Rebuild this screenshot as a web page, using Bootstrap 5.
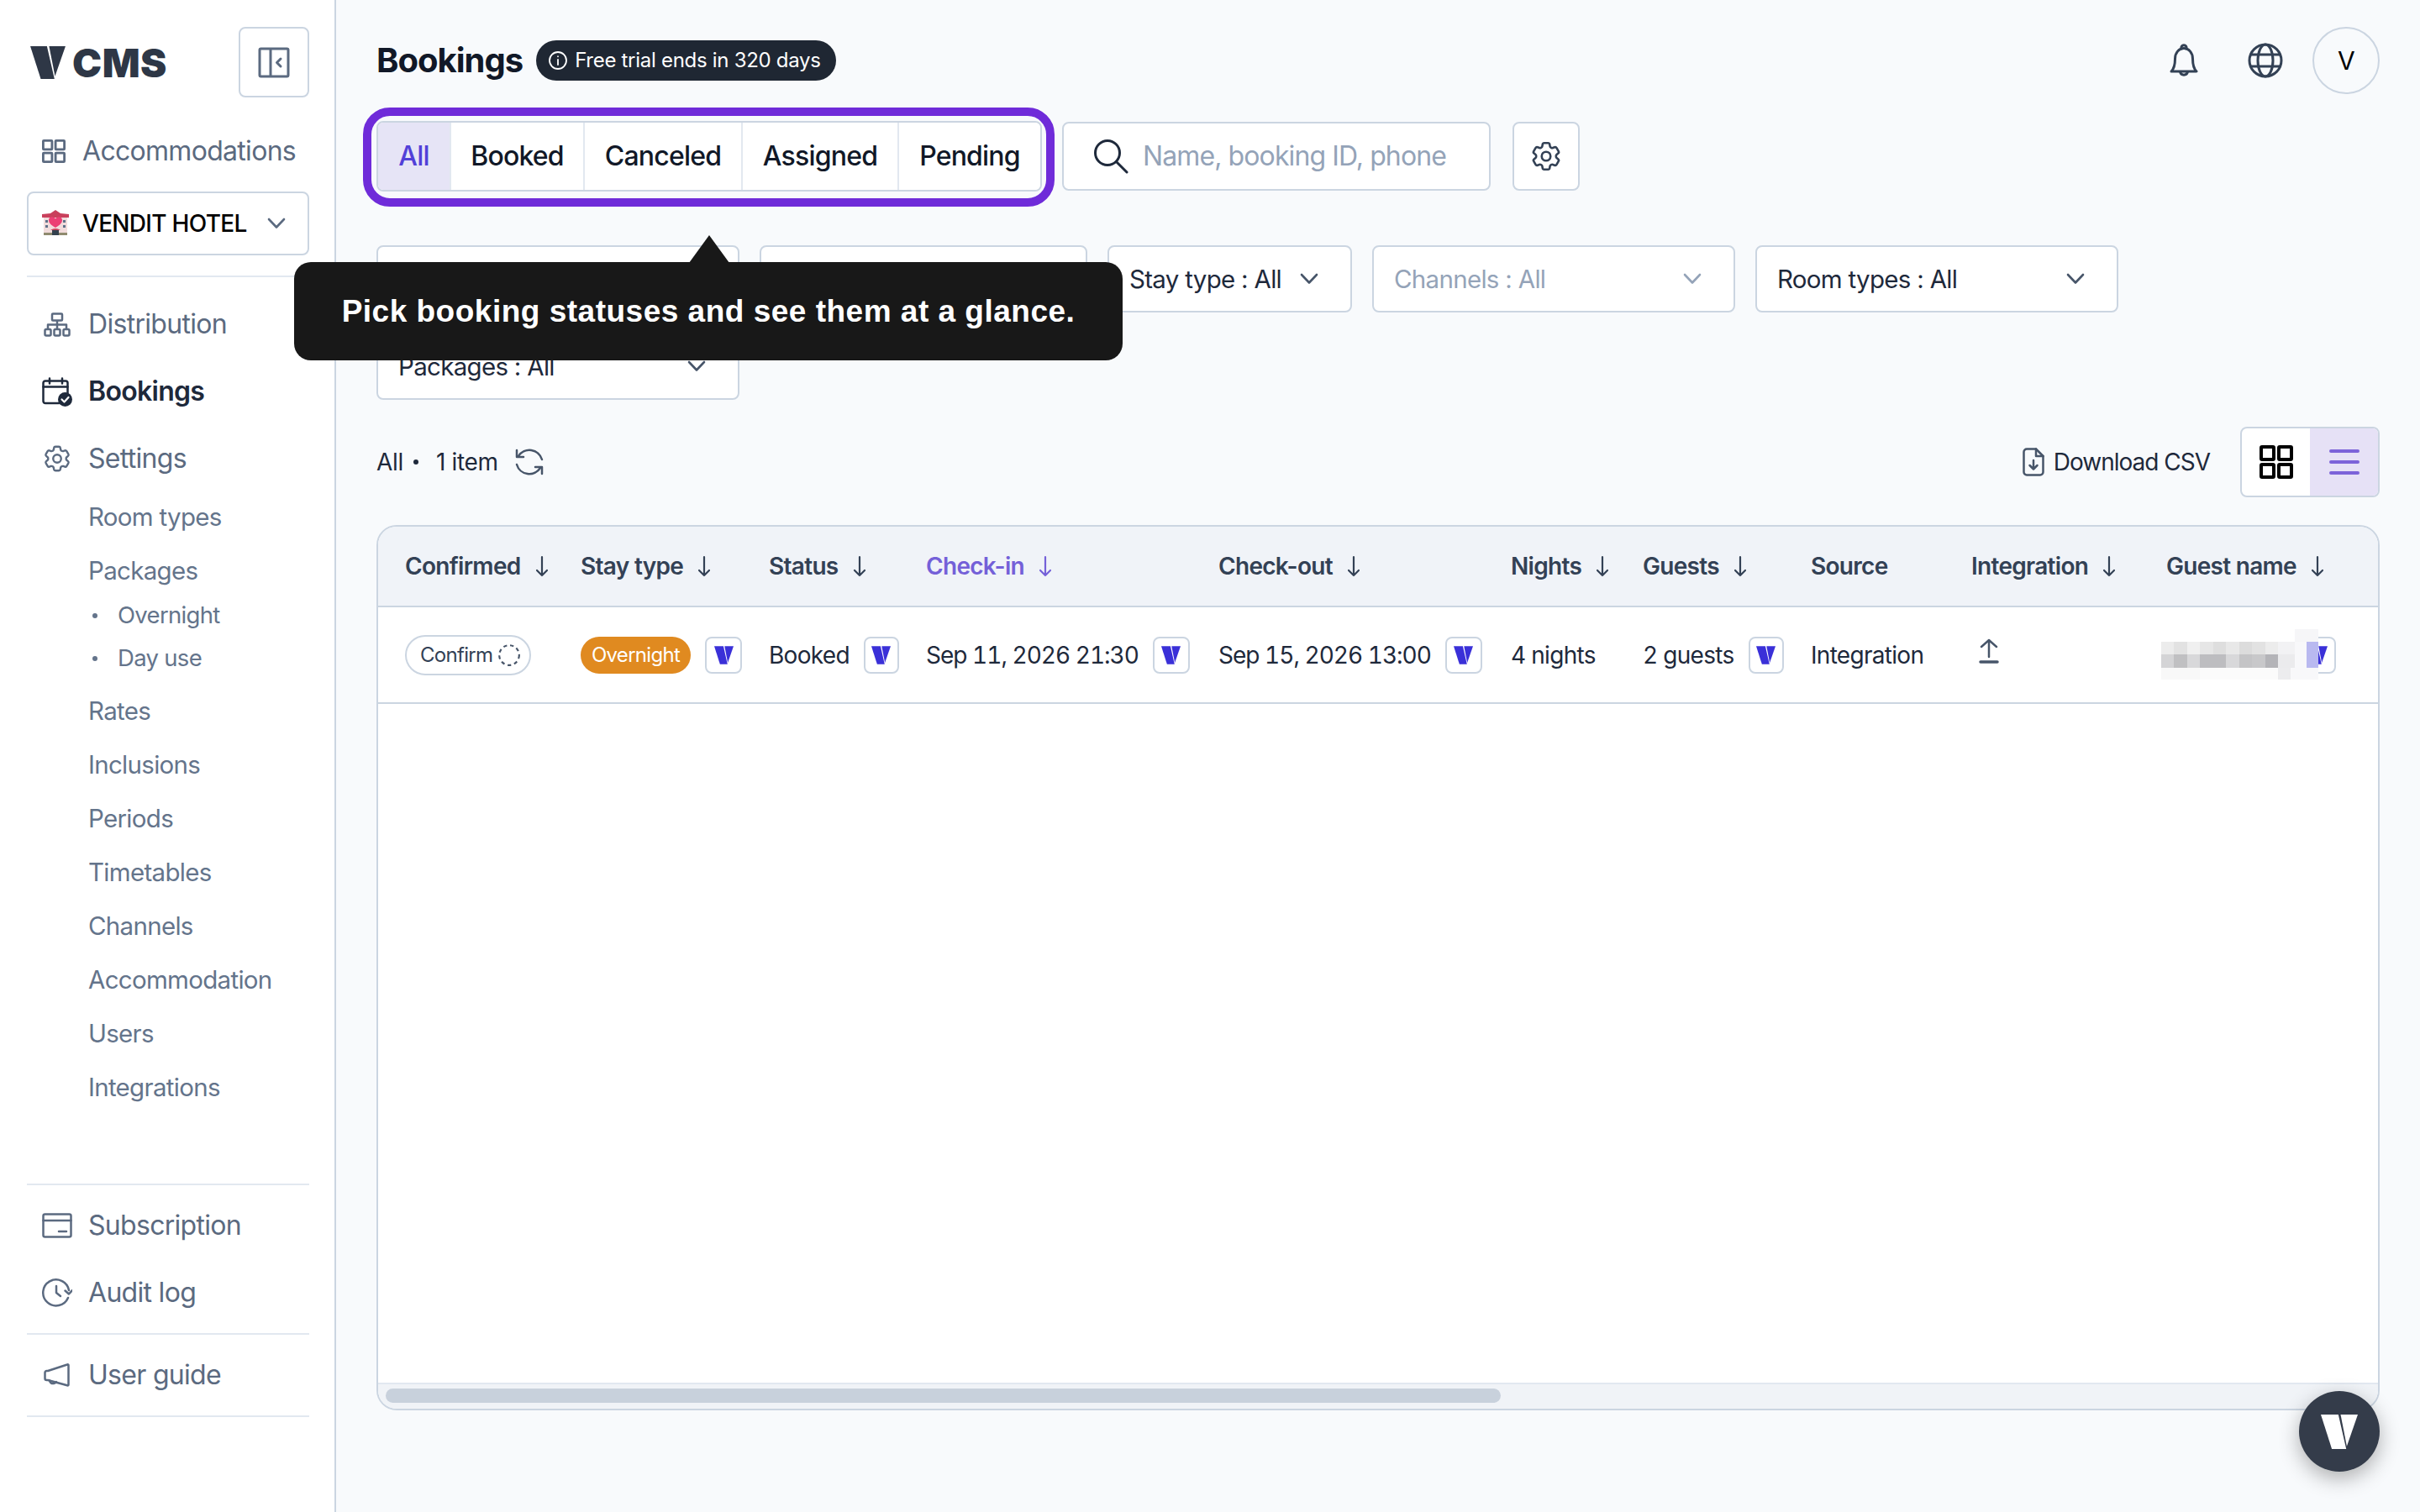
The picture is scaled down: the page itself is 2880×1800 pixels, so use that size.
<!DOCTYPE html>
<html lang="en">
<head>
    <meta charset="UTF-8">
    <meta name="viewport" content="width=device-width, initial-scale=1.0">
    <title>Bookings</title>
    <link href="https://cdn.jsdelivr.net/npm/bootstrap@5.3.3/dist/css/bootstrap.min.css" rel="stylesheet">
    <style>
        body { font-family: Inter, "Liberation Sans", sans-serif; background: #f8fafc; color: #1e293b; font-size: 28px; letter-spacing: -0.025em; overflow: hidden; }
        svg { display: block; flex: none; }

        /* sidebar */
        .side { width: 400px; height: 1800px; flex: none; background: #fff; border-right: 2px solid #cbd5e1; padding: 32px 30px 0 32px; color: #5b6a80; }
        .logo-box { margin-left: 3px; gap: 7px; color: #2e3746; }
        .logo-txt { font-weight: 900; font-size: 47px; line-height: 1; letter-spacing: 0.5px; }
        .collapse-btn { width: 84px; height: 84px; padding: 0; border: 2px solid #cbd5e1; border-radius: 8px; background: #fff; color: #5b6a80; }
        .accom { height: 64px; margin-top: 32px; padding-left: 18px; gap: 20px; font-size: 32px; }
        .hotel-pick { height: 76px; margin-top: 16px; padding: 0 26px 0 16px; border: 2px solid #cbd5e1; border-radius: 8px; color: #000; font-size: 28px; font-weight: 500; }
        .hotel-chev { color: #5b6a80; }
        .sb-rule { border-top: 2px solid #e2e8f0; }
        .sb-item { height: 80px; padding-left: 18px; gap: 19px; font-size: 32px; color: #5b6a80; text-decoration: none; }
        .sb-item.on { color: #1e293b; font-weight: 600; }
        .sb-ic { width: 36px; display: flex; justify-content: center; }
        .sb-sub { height: 64px; padding-left: 73px; font-size: 29.5px; color: #64748b; }
        .sb-pack { height: 51px; padding-left: 108px; font-size: 27.5px; color: #64748b; position: relative; }
        .sb-pack::before { content: ""; position: absolute; left: 78px; top: 23px; width: 6px; height: 6px; border-radius: 50%; background: #64748b; }
        .sub-first { margin-top: -3px; }
        .sub-o { margin-top: -4px; }
        .sub-r { margin-top: 5px; }
        .sb-low { margin-top: 83px; }

        /* main */
        .page { flex: 1; padding: 32px 48px 0; min-width: 0; }
        .page-title { font-size: 40px; font-weight: 700; letter-spacing: -0.025em; color: #111827; line-height: 1; margin: 0; }
        .trial { height: 48px; padding: 0 18px 0 14px; gap: 8px; border-radius: 24px; background: #1f2733; color: #fff; font-size: 24px; letter-spacing: -0.012em; }
        .avatar { width: 80px; height: 80px; margin-left: 35px; border: 2px solid #cbd5e1; border-radius: 50%; color: #000; font-size: 30px; }
        .top-ic { color: #334155; }
        .globe-ic { margin-left: 59px; }

        .top-tools { margin-top: 32px; align-items: center; }
        .tabs-wrap { position: relative; }
        .tabs { border: 2px solid #cbd5e1; border-radius: 8px; background: #fff; height: 84px; overflow: hidden; }
        .tabs .btn { border: 0; border-radius: 0; border-left: 2px solid #e2e8f0; font-size: 32px; font-weight: 500; letter-spacing: -0.025em; color: #111827; padding: 0; line-height: 1; background: #fff; }
        .tabs.btn-group .btn:not(:first-child) { margin-left: 0; }
        .tabs .btn:first-child { border-left: 0; }
        .tabs .btn.sel { background: #e6e4f6; color: #5240d8; width: 85px; }
        .tabs .btn:nth-child(2) { width: 159px; }
        .tabs .btn:nth-child(3) { width: 188px; }
        .tabs .btn:nth-child(4) { width: 186px; }
        .tabs .btn:nth-child(5) { width: 170px; }
        .spot { position: absolute; left: -16px; top: -16px; right: -15px; bottom: -18px; border: 10px solid #6f2bd9; border-radius: 32px; pointer-events: none; }
        .find { width: 510px; height: 82px; margin-left: 24px; padding-left: 35px; gap: 17px; border: 2px solid #cbd5e1; border-radius: 8px; background: #fff; }
        .find input { border: 0; outline: 0; padding: 0; font-size: 32px; letter-spacing: -0.028em; background: none; width: 100%; color: #1e293b; }
        .find input::placeholder { color: #94a3b8; opacity: 1; }
        .gear-btn { width: 80px; height: 82px; margin-left: 26px; padding: 0; border: 2px solid #cbd5e1; border-radius: 8px; background: #fff; color: #334155; }

        .filters { gap: 24px; margin-top: 64px; }
        .flt { height: 80px; padding: 0 38px 0 24px; border: 2px solid #cbd5e1; border-radius: 8px; background: #fff; font-size: 29.5px; color: #1e293b; }
        .flt svg { color: #475569; }
        .flt.off { color: #94a3b8; }
        .flt.off svg { color: #94a3b8; }
        .w-a { width: 432px; }
        .w-b { width: 390px; }
        .w-c { width: 291px; }

        .tip { position: absolute; left: -98px; top: 168px; width: 986px; height: 117px; border-radius: 20px; background: #181818; color: #fff; font-family: "Liberation Sans", sans-serif; font-weight: 700; font-size: 37px; letter-spacing: 0.5px; z-index: 5; }
        .tip::before { content: ""; position: absolute; left: 470px; top: -32px; border-left: 24px solid transparent; border-right: 24px solid transparent; border-bottom: 33px solid #181818; }

        .bar { height: 84px; margin-top: 32px; font-size: 28px; }
        .bar-left { letter-spacing: -0.012em; }
        .bar-dot { width: 6px; height: 6px; margin: 0 21px 0 12px; border-radius: 50%; background: #1e293b; }
        .refresh-ic { margin-left: 19px; }
        .csv-txt { margin-left: 11px; letter-spacing: -0.036em; }
        .view-sw { width: 166px; height: 84px; margin-left: 36px; border: 2px solid #cbd5e1; border-radius: 8px; overflow: hidden; background: #fff; }
        .view-sw span { flex: 1; display: flex; align-items: center; justify-content: center; color: #000; }
        .view-sw .cur { background: #e6e1f6; color: #7c63d9; }

        .grid-box { height: 1054px; margin-top: 33px; border: 2px solid #cbd5e1; border-radius: 24px; background: #fff; overflow: hidden; }
        .grid-scroll { flex: 1; overflow: hidden; }
        .grid-box .table { table-layout: fixed; width: 2901px; margin: 0; --bs-table-bg: transparent; }
        .grid-box th { height: 95px; padding: 0 0 0 32px; background: #f0f3f8; border-bottom: 2px solid #cbd5e1; font-size: 28px; font-weight: 600; color: #334155; vertical-align: middle; white-space: nowrap; }
        .grid-box td { height: 115px; padding: 0 0 0 32px; border-bottom: 2px solid #cbd5e1; font-size: 28px; color: #1e293b; vertical-align: middle; white-space: nowrap; font-variant-numeric: tabular-nums; }
        .grid-box th.act { color: #7460d8; }
        .c1 { width: 209px; } .c2 { width: 224px; } .c3 { width: 187px; } .c4 { width: 348px; } .c5 { width: 348px; }
        .c6 { width: 157px; } .c7 { width: 200px; } .c8 { width: 191px; } .c9 { width: 232px; } .c10 { width: 805px; }
        .head-cell { gap: 17px; }
        .conf-pill { width: 150px; height: 48px; border: 2px solid #cbd5e1; border-radius: 24px; padding-left: 16px; gap: 6px; font-size: 24px; color: #334155; }
        .stay-pill { width: 131px; height: 44px; border-radius: 22px; background: #e08a20; color: #fff; font-size: 24px; }
        .vbox { width: 44px; height: 44px; border: 2px solid #cbd5e1; border-radius: 8px; color: #3a30d8; background: #fff; }
        .row-cell { gap: 17px; }
        .dt { letter-spacing: -0.035em; }
        .up-ic { margin: 0 0 10px 8px; }
        .name-cell { position: relative; height: 44px; padding-left: 158px; }
        .name-blur { position: absolute; left: -6px; top: -9px; }
        .hscroll { height: 31px; flex: none; background: #f0f3f7; border-top: 2px solid #e2e8f0; padding: 5px 0 0 9px; }
        .hscroll div { width: 1327px; height: 17px; border-radius: 9px; background: #c8d1dc; }
        .fab { position: fixed; right: 48px; bottom: 48px; width: 96px; height: 96px; border-radius: 50%; background: #343c4a; color: #fff; box-shadow: 0 8px 24px rgba(0,0,0,.3); z-index: 6; }
    </style>
</head>
<body>
    <svg width="0" height="0" class="position-absolute">
        <symbol id="vmark" viewBox="0 0 131 122"><path fill="currentColor" d="M0 0H62L90 122H39Z"/><path fill="currentColor" d="M70 0H131L92 112Z"/></symbol>
        <symbol id="chev" viewBox="0 0 22 14"><path d="M2 2l9 9.500 9-9.500" fill="none" stroke="currentColor" stroke-width="2.600" stroke-linecap="round" stroke-linejoin="round"/></symbol>
        <symbol id="darr" viewBox="0 0 16 26"><path d="M8 2v22M2 18l6 6 6-6" fill="none" stroke="currentColor" stroke-width="2.200" stroke-linecap="round" stroke-linejoin="round"/></symbol>
        <symbol id="cog" viewBox="0 0 24 24"><g fill="none" stroke="currentColor" stroke-width="1.500" stroke-linecap="round" stroke-linejoin="round"><path d="M9.594 3.940c.09-.542.56-.94 1.110-.94h2.593c.55 0 1.020.398 1.110.94l.213 1.281c.063.374.313.686.645.870.074.040.147.083.22.127.325.196.72.257 1.075.124l1.217-.456a1.125 1.125 0 0 1 1.370.49l1.296 2.247a1.125 1.125 0 0 1-.26 1.431l-1.003.827c-.293.241-.438.613-.43.992a7.723 7.723 0 0 1 0 .255c-.008.378.137.75.43.991l1.004.827c.424.35.534.955.26 1.430l-1.298 2.247a1.125 1.125 0 0 1-1.369.491l-1.217-.456c-.355-.133-.75-.072-1.076.124a6.470 6.470 0 0 1-.22.128c-.331.183-.581.495-.644.869l-.213 1.281c-.09.543-.56.94-1.110.94h-2.594c-.55 0-1.019-.398-1.110-.94l-.213-1.281c-.062-.374-.312-.686-.644-.87a6.520 6.520 0 0 1-.22-.127c-.325-.196-.72-.257-1.076-.124l-1.217.456a1.125 1.125 0 0 1-1.369-.49l-1.297-2.247a1.125 1.125 0 0 1 .26-1.431l1.004-.827c.292-.24.437-.613.43-.991a6.932 6.932 0 0 1 0-.255c.007-.38-.138-.751-.43-.992l-1.004-.827a1.125 1.125 0 0 1-.26-1.430l1.297-2.247a1.125 1.125 0 0 1 1.370-.491l1.216.456c.356.133.751.072 1.076-.124.072-.044.146-.086.22-.128.332-.183.582-.495.644-.869l.214-1.280Z"/><path d="M15 12a3 3 0 1 1-6 0 3 3 0 0 1 6 0Z"/></g></symbol>
        <symbol id="four" viewBox="0 0 40 40"><g fill="none" stroke="currentColor" stroke-width="4" stroke-linejoin="round"><rect x="2" y="2" width="15" height="15" rx="1"/><rect x="23" y="2" width="15" height="15" rx="1"/><rect x="2" y="23" width="15" height="15" rx="1"/><rect x="23" y="23" width="15" height="15" rx="1"/></g></symbol>
    </svg>

    <div class="d-flex">
        <aside class="side">
            <div class="d-flex justify-content-between align-items-center">
                <div class="logo-box d-flex align-items-center">
                    <svg width="44" height="39"><use href="#vmark"/></svg>
                    <span class="logo-txt">CMS</span>
                </div>
                <button class="collapse-btn d-flex align-items-center justify-content-center" type="button">
                    <svg width="38" height="37" viewBox="0 0 38 37" fill="none" stroke="currentColor" stroke-width="3"><rect x="2" y="2" width="34" height="33" rx="1.500"/><path d="M15 2v33"/><path d="M27 14l-4.500 4.500 4.500 4.500" stroke-linecap="round" stroke-linejoin="round"/></svg>
                </button>
            </div>

            <div class="accom d-flex align-items-center">
                <svg width="28" height="28" viewBox="0 0 40 40"><use href="#four"/></svg>
                <span>Accommodations</span>
            </div>
            <div class="hotel-pick d-flex align-items-center justify-content-between">
                <div class="d-flex align-items-center gap-3">
                    <svg width="32" height="32" viewBox="0 0 32 32">
                        <rect x="2" y="7" width="28" height="23" fill="#f1dcdc"/>
                        <path d="M0 5l10-1 6-4 6 4 10 1v4H0z" fill="#c9405c"/>
                        <path d="M16 21c-6-3.500-8-6-8-9 0-4 5.500-5 8-1.500 2.500-3.500 8-2.500 8 1.500 0 3-2 5.500-8 9z" fill="#ec3f74"/>
                        <path d="M4 12h3v3H4zM25 12h3v3h-3zM4 18h3v3H4zM25 18h3v3h-3z" fill="#60728a"/>
                        <path d="M2 27h28v3H2z" fill="#8f8b6f"/><path d="M12 24h8v6h-8z" fill="#33414e"/><path d="M10 24q6-4 12 0z" fill="#c9405c"/>
                    </svg>
                    <span>VENDIT HOTEL</span>
                </div>
                <svg class="hotel-chev" width="22" height="14"><use href="#chev"/></svg>
            </div>
            <div class="sb-rule mt-4 mb-3"></div>

            <nav class="d-flex flex-column">
                <a class="sb-item d-flex align-items-center" href="#">
                    <span class="sb-ic"><svg width="32" height="29" viewBox="0 0 32 29" fill="none" stroke="currentColor" stroke-width="2.500" stroke-linejoin="round"><rect x="10" y="1.500" width="12" height="8" rx="1"/><path d="M16 9.500v10M5 19.500v-5h22v5"/><rect x="1.500" y="20" width="7" height="7.500" rx="1.500"/><rect x="12.500" y="20" width="7" height="7.500" rx="1.500"/><rect x="23.500" y="20" width="7" height="7.500" rx="1.500"/></svg></span>
                    <span>Distribution</span>
                </a>
                <a class="sb-item on d-flex align-items-center" href="#">
                    <span class="sb-ic"><svg width="36" height="35" viewBox="0 0 36 35"><g fill="none" stroke="#1e293b" stroke-width="2.500" stroke-linecap="round" stroke-linejoin="round"><path d="M20 31H4a2.500 2.500 0 0 1-2.500-2.500V7A2.500 2.500 0 0 1 4 4.500h24A2.500 2.500 0 0 1 30.500 7v12"/><path d="M1.500 11.500h29M9 1.500v6M24 1.500v6"/></g><circle cx="27.500" cy="26.500" r="8.500" fill="#1e293b"/><path d="M23.500 26.500l3 3 5-5.500" fill="none" stroke="#fff" stroke-width="2.200" stroke-linecap="round" stroke-linejoin="round"/></svg></span>
                    <span>Bookings</span>
                </a>
                <a class="sb-item d-flex align-items-center" href="#">
                    <span class="sb-ic"><svg width="38" height="38"><use href="#cog"/></svg></span>
                    <span>Settings</span>
                </a>
                <div class="sb-sub d-flex align-items-center sub-first">Room types</div>
                <div class="sb-sub d-flex align-items-center">Packages</div>
                <div class="sb-pack d-flex align-items-center sub-o">Overnight</div>
                <div class="sb-pack d-flex align-items-center">Day use</div>
                <div class="sb-sub d-flex align-items-center sub-r">Rates</div>
                <div class="sb-sub d-flex align-items-center">Inclusions</div>
                <div class="sb-sub d-flex align-items-center">Periods</div>
                <div class="sb-sub d-flex align-items-center">Timetables</div>
                <div class="sb-sub d-flex align-items-center">Channels</div>
                <div class="sb-sub d-flex align-items-center">Accommodation</div>
                <div class="sb-sub d-flex align-items-center">Users</div>
                <div class="sb-sub d-flex align-items-center">Integrations</div>
            </nav>

            <div class="sb-rule sb-low mb-2"></div>
            <a class="sb-item d-flex align-items-center" href="#">
                <span class="sb-ic"><svg width="36" height="30" viewBox="0 0 36 30" fill="none" stroke="currentColor" stroke-width="2.500" stroke-linecap="round" stroke-linejoin="round"><rect x="1.500" y="1.500" width="33" height="27" rx="2"/><path d="M1.500 9h33M20 22h9"/></svg></span>
                <span>Subscription</span>
            </a>
            <a class="sb-item d-flex align-items-center" href="#">
                <span class="sb-ic"><svg width="36" height="34" viewBox="0 0 36 34" fill="none" stroke="currentColor" stroke-width="2.500" stroke-linecap="round" stroke-linejoin="round"><path d="M31 23a15.500 15.500 0 1 1 1-9"/><path d="M36 14l-4 4.500-4.500-4"/><path d="M17 9v8l5 4"/></svg></span>
                <span>Audit log</span>
            </a>
            <div class="sb-rule my-2"></div>
            <a class="sb-item d-flex align-items-center" href="#">
                <span class="sb-ic"><svg width="32" height="28" viewBox="0 0 32 28" fill="none" stroke="currentColor" stroke-width="2.500" stroke-linecap="round" stroke-linejoin="round"><path d="M29.500 2v23.500c0 1-.8 1-1.500.8L5 20H3.500a2 2 0 0 1-2-2V11a2 2 0 0 1 2-2H5L28 1.500c.8-.3 1.500 0 1.500.5z"/><path d="M7 20.500c.5 2.500 2.500 4 5 3.500 1.500-.3 2.500-1 3-2"/></svg></span>
                <span>User guide</span>
            </a>
            <div class="sb-rule my-2"></div>
        </aside>

        <main class="page">
            <div class="d-flex align-items-center justify-content-between">
                <div class="d-flex align-items-center gap-3">
                    <h1 class="page-title">Bookings</h1>
                    <span class="trial d-inline-flex align-items-center">
                        <svg width="24" height="24" viewBox="0 0 24 24" fill="none" stroke="currentColor" stroke-width="1.800" stroke-linecap="round"><circle cx="12" cy="12" r="10"/><path d="M12 11v6M12 7.200v.1"/></svg>
                        Free trial ends in 320 days
                    </span>
                </div>
                <div class="d-flex align-items-center top-ic">
                    <svg width="34" height="42" viewBox="0 0 34 42" fill="none" stroke="currentColor" stroke-width="3" stroke-linecap="round" stroke-linejoin="round"><path d="M14 7a3.200 3.200 0 1 1 6 0"/><path d="M2 34c3-3 4.500-7 4.500-15C6.500 12 11 6.500 17 6.500S27.500 12 27.500 19c0 8 1.500 12 4.500 15z"/><path d="M12.500 34.500a4.600 4.600 0 0 0 9 0"/></svg>
                    <svg class="globe-ic" width="42" height="42" viewBox="0 0 42 42" fill="none" stroke="currentColor" stroke-width="3"><circle cx="21" cy="21" r="19"/><ellipse cx="21" cy="21" rx="9" ry="19"/><path d="M4 14h34M4 28h34"/></svg>
                    <span class="avatar d-flex align-items-center justify-content-center">V</span>
                </div>
            </div>

            <div class="d-flex top-tools">
                <div class="tabs-wrap">
                    <div class="btn-group tabs" role="group">
                        <button type="button" class="btn sel">All</button>
                        <button type="button" class="btn">Booked</button>
                        <button type="button" class="btn">Canceled</button>
                        <button type="button" class="btn">Assigned</button>
                        <button type="button" class="btn">Pending</button>
                    </div>
                    <div class="spot"></div>
                    <div class="tip d-flex align-items-center justify-content-center">Pick booking statuses and see them at a glance.</div>
                </div>
                <div class="find d-flex align-items-center">
                    <svg width="42" height="42" viewBox="0 0 42 42" fill="none" stroke="#1e293b" stroke-width="3" stroke-linecap="round"><circle cx="17" cy="17" r="14.500"/><path d="M27.500 27.500L40 40"/></svg>
                    <input type="text" placeholder="Name, booking ID, phone">
                </div>
                <button class="gear-btn d-flex align-items-center justify-content-center" type="button"><svg width="42" height="42"><use href="#cog"/></svg></button>
            </div>

            <div class="filters d-flex flex-wrap">
                <div class="flt w-a d-flex align-items-center justify-content-between"><span>Confirmed : All</span><svg width="22" height="14"><use href="#chev"/></svg></div>
                <div class="flt w-b d-flex align-items-center justify-content-between"><span>Status : All</span><svg width="22" height="14"><use href="#chev"/></svg></div>
                <div class="flt w-c d-flex align-items-center justify-content-between"><span>Stay type : All</span><svg width="22" height="14"><use href="#chev"/></svg></div>
                <div class="flt off w-a d-flex align-items-center justify-content-between"><span>Channels : All</span><svg width="22" height="14"><use href="#chev"/></svg></div>
                <div class="flt w-a d-flex align-items-center justify-content-between"><span>Room types : All</span><svg width="22" height="14"><use href="#chev"/></svg></div>
                <div class="flt w-a d-flex align-items-center justify-content-between"><span>Packages : All</span><svg width="22" height="14"><use href="#chev"/></svg></div>
            </div>

            <div class="bar d-flex align-items-center justify-content-between">
                <div class="bar-left d-flex align-items-center">
                    <span>All</span><span class="bar-dot"></span><span>1 item</span>
                    <svg class="refresh-ic" width="36" height="34" viewBox="0 0 36 34" fill="none" stroke="#475569" stroke-width="2.500" stroke-linecap="round" stroke-linejoin="round"><path d="M33 14A15.500 15.500 0 0 0 5 10"/><path d="M3 3v8h8"/><path d="M3 20a15.500 15.500 0 0 0 28 4"/><path d="M33 31v-8h-8"/></svg>
                </div>
                <div class="d-flex align-items-center">
                    <svg width="26" height="34" viewBox="0 0 26 34" fill="none" stroke="#475569" stroke-width="2.500" stroke-linecap="round" stroke-linejoin="round"><path d="M16 1.500H5a3.500 3.500 0 0 0-3.500 3.500v24A3.500 3.500 0 0 0 5 32.500h16a3.500 3.500 0 0 0 3.500-3.500V10z"/><path d="M16 1.500V10h8.500" /><path d="M13 15v10M8.500 21l4.500 4.500 4.500-4.500"/></svg>
                    <span class="csv-txt">Download CSV</span>
                    <div class="view-sw d-flex">
                        <span><svg width="40" height="40"><use href="#four"/></svg></span>
                        <span class="cur"><svg width="36" height="32" viewBox="0 0 36 32" stroke="currentColor" stroke-width="4" stroke-linecap="round"><path d="M2 3h32M2 16h32M2 29h32"/></svg></span>
                    </div>
                </div>
            </div>

            <div class="grid-box d-flex flex-column">
                <div class="grid-scroll">
                    <table class="table">
                        <colgroup><col class="c1"><col class="c2"><col class="c3"><col class="c4"><col class="c5"><col class="c6"><col class="c7"><col class="c8"><col class="c9"><col class="c10"></colgroup>
                        <thead>
                            <tr>
                                <th><div class="head-cell d-flex align-items-center">Confirmed<svg width="16" height="26"><use href="#darr"/></svg></div></th>
                                <th><div class="head-cell d-flex align-items-center">Stay type<svg width="16" height="26"><use href="#darr"/></svg></div></th>
                                <th><div class="head-cell d-flex align-items-center">Status<svg width="16" height="26"><use href="#darr"/></svg></div></th>
                                <th class="act"><div class="head-cell d-flex align-items-center">Check-in<svg width="16" height="26"><use href="#darr"/></svg></div></th>
                                <th><div class="head-cell d-flex align-items-center">Check-out<svg width="16" height="26"><use href="#darr"/></svg></div></th>
                                <th><div class="head-cell d-flex align-items-center">Nights<svg width="16" height="26"><use href="#darr"/></svg></div></th>
                                <th><div class="head-cell d-flex align-items-center">Guests<svg width="16" height="26"><use href="#darr"/></svg></div></th>
                                <th>Source</th>
                                <th><div class="head-cell d-flex align-items-center">Integration<svg width="16" height="26"><use href="#darr"/></svg></div></th>
                                <th><div class="head-cell d-flex align-items-center">Guest name<svg width="16" height="26"><use href="#darr"/></svg></div></th>
                            </tr>
                        </thead>
                        <tbody>
                            <tr>
                                <td><span class="conf-pill d-flex align-items-center">Confirm<svg width="28" height="28" viewBox="0 0 26 26" fill="none" stroke="#475569" stroke-width="2" stroke-dasharray="4 3.500"><circle cx="13" cy="13" r="11"/></svg></span></td>
                                <td><div class="row-cell d-flex align-items-center"><span class="stay-pill d-flex align-items-center justify-content-center">Overnight</span><span class="vbox d-flex align-items-center justify-content-center"><svg width="23" height="22"><use href="#vmark"/></svg></span></div></td>
                                <td><div class="row-cell d-flex align-items-center">Booked<span class="vbox d-flex align-items-center justify-content-center"><svg width="23" height="22"><use href="#vmark"/></svg></span></div></td>
                                <td><div class="row-cell dt d-flex align-items-center">Sep 11, 2026 21:30<span class="vbox d-flex align-items-center justify-content-center"><svg width="23" height="22"><use href="#vmark"/></svg></span></div></td>
                                <td><div class="row-cell dt d-flex align-items-center">Sep 15, 2026 13:00<span class="vbox d-flex align-items-center justify-content-center"><svg width="23" height="22"><use href="#vmark"/></svg></span></div></td>
                                <td>4 nights</td>
                                <td><div class="row-cell d-flex align-items-center">2 guests<span class="vbox d-flex align-items-center justify-content-center"><svg width="23" height="22"><use href="#vmark"/></svg></span></div></td>
                                <td>Integration</td>
                                <td><svg class="up-ic" width="26" height="30" viewBox="0 0 26 30" fill="none" stroke="#475569" stroke-width="2.500" stroke-linecap="round" stroke-linejoin="round"><path d="M13 22V2M4 10l9-8 9 8"/><path d="M3 28h20" stroke-width="3.500"/></svg></td>
                                <td>
                                    <div class="name-cell d-flex align-items-center">
                                        <span class="vbox d-flex align-items-center justify-content-center"><svg width="23" height="22"><use href="#vmark"/></svg></span>
                                        <svg class="name-blur" width="187" height="60" viewBox="0 0 187 60">
                                            <rect x="159" width="28" height="15" fill="#f6f6f8"/>
                                            <g fill="#e6e6e6"><rect y="15" width="15" height="15" fill="#ececec"/><rect x="15" y="15" width="16" height="15" fill="#e2e2e2"/><rect x="31" y="15" width="15" height="15" fill="#f0f0f0"/><rect x="46" y="15" width="16" height="15"/><rect x="62" y="15" width="15" height="15" fill="#dedede"/><rect x="77" y="15" width="16" height="15" fill="#e8e8e8"/><rect x="93" y="15" width="15" height="15" fill="#dcdcdc"/><rect x="108" y="15" width="16" height="15" fill="#e2e2e2"/><rect x="124" y="15" width="15" height="15" fill="#ececec"/><rect x="139" y="15" width="20" height="15" fill="#f2f2f4"/><rect x="159" y="15" width="14" height="15" fill="#f8f8fa"/></g>
                                            <g fill="#c8c8ca"><rect y="30" width="15" height="16" fill="#d4d4d6"/><rect x="15" y="30" width="16" height="16" fill="#c0c0c2"/><rect x="31" y="30" width="15" height="16" fill="#d8d8da"/><rect x="46" y="30" width="31" height="16" fill="#bdbdc0"/><rect x="77" y="30" width="16" height="16" fill="#d8d8da"/><rect x="93" y="30" width="15" height="16" fill="#c4c4c6"/><rect x="108" y="30" width="16" height="16"/><rect x="124" y="30" width="15" height="16" fill="#b4b4b8"/><rect x="139" y="30" width="20" height="16" fill="#ebebed"/><rect x="159" y="30" width="14" height="16" fill="#f8f8fa"/></g>
                                            <rect x="173" y="15" width="14" height="31" fill="#b9b9f0"/>
                                            <g fill="#f8f8f8"><rect y="46" width="46" height="14"/><rect x="46" y="46" width="93" height="14" fill="#fbfbfb"/><rect x="139" y="46" width="15" height="14" fill="#ececee"/><rect x="154" y="46" width="33" height="14" fill="#f8f8fa"/></g>
                                        </svg>
                                    </div>
                                </td>
                            </tr>
                        </tbody>
                    </table>
                </div>
                <div class="hscroll"><div></div></div>
            </div>
        </main>
    </div>

    <div class="fab d-flex align-items-center justify-content-center"><svg width="44" height="41"><use href="#vmark"/></svg></div>

    <script src="https://cdn.jsdelivr.net/npm/bootstrap@5.3.3/dist/js/bootstrap.bundle.min.js"></script>
</body>
</html>
